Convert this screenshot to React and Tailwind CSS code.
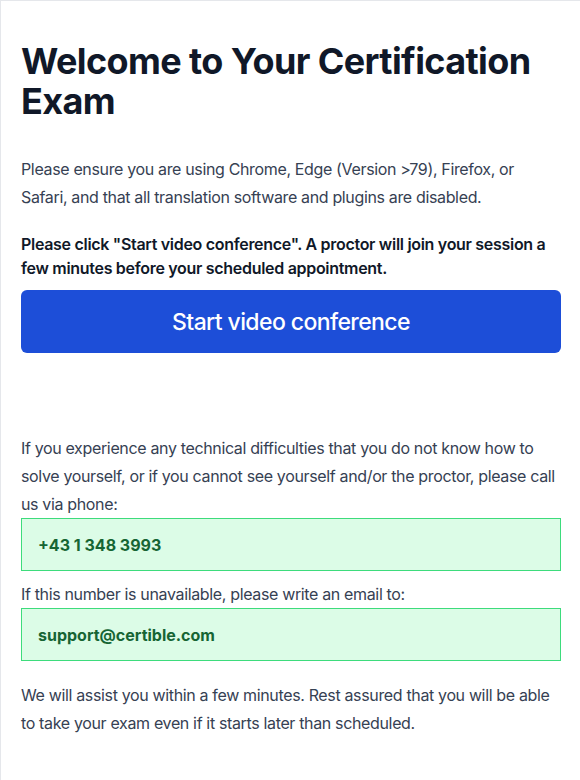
const App = () => {
  const phone = "+43 1 348 3993";
  const email = "support@certible.com";

  return (
    <div className="min-h-screen bg-white font-['Inter',sans-serif] text-gray-700">
      <div className="min-h-screen border-t border-l border-gray-200 pl-5 pr-[19px] pt-10 pb-10">
        <h1 className="text-4xl leading-10 font-bold text-gray-900 tracking-[-0.6px]">
          Welcome to Your Certification Exam
        </h1>

        <p className="mt-[34px] text-base leading-7 tracking-[-0.35px]">
          Please ensure you are using Chrome, Edge (Version &gt;79), Firefox, or Safari, and that all translation
          software and plugins are disabled.
        </p>

        <p className="mt-[21px] text-base leading-6 font-semibold text-gray-900 tracking-[-0.3px]">
          Please click "Start video conference". A proctor will join your session a few minutes before your scheduled
          appointment.
        </p>

        <button className="mt-2.5 w-full rounded-md bg-[#1d4ed8] py-[15.5px] text-[23px] leading-8 font-medium text-white tracking-[-0.6px]">
          Start video conference
        </button>

        <p className="mt-[81px] text-base leading-7 tracking-[-0.35px]">
          If you experience any technical difficulties that you do not know how to solve yourself, or if you cannot see
          yourself and/or the proctor, please call us via phone:
        </p>
        <div className="border border-[#3ddc7c] bg-[#dcfce7] px-4 py-[13.5px] text-base leading-6 font-bold text-[#166534]">
          {phone}
        </div>

        <p className="mt-[9px] text-base leading-7 tracking-[-0.35px]">
          If this number is unavailable, please write an email to:
        </p>
        <div className="border border-[#3ddc7c] bg-[#dcfce7] px-4 py-[13.5px] text-base leading-6 font-bold text-[#166534]">
          {email}
        </div>

        <p className="mt-5 text-base leading-7 tracking-[-0.35px]">
          We will assist you within a few minutes. Rest assured that you will be able to take your exam even if it
          starts later than scheduled.
        </p>
      </div>
    </div>
  );
};

export default App;
